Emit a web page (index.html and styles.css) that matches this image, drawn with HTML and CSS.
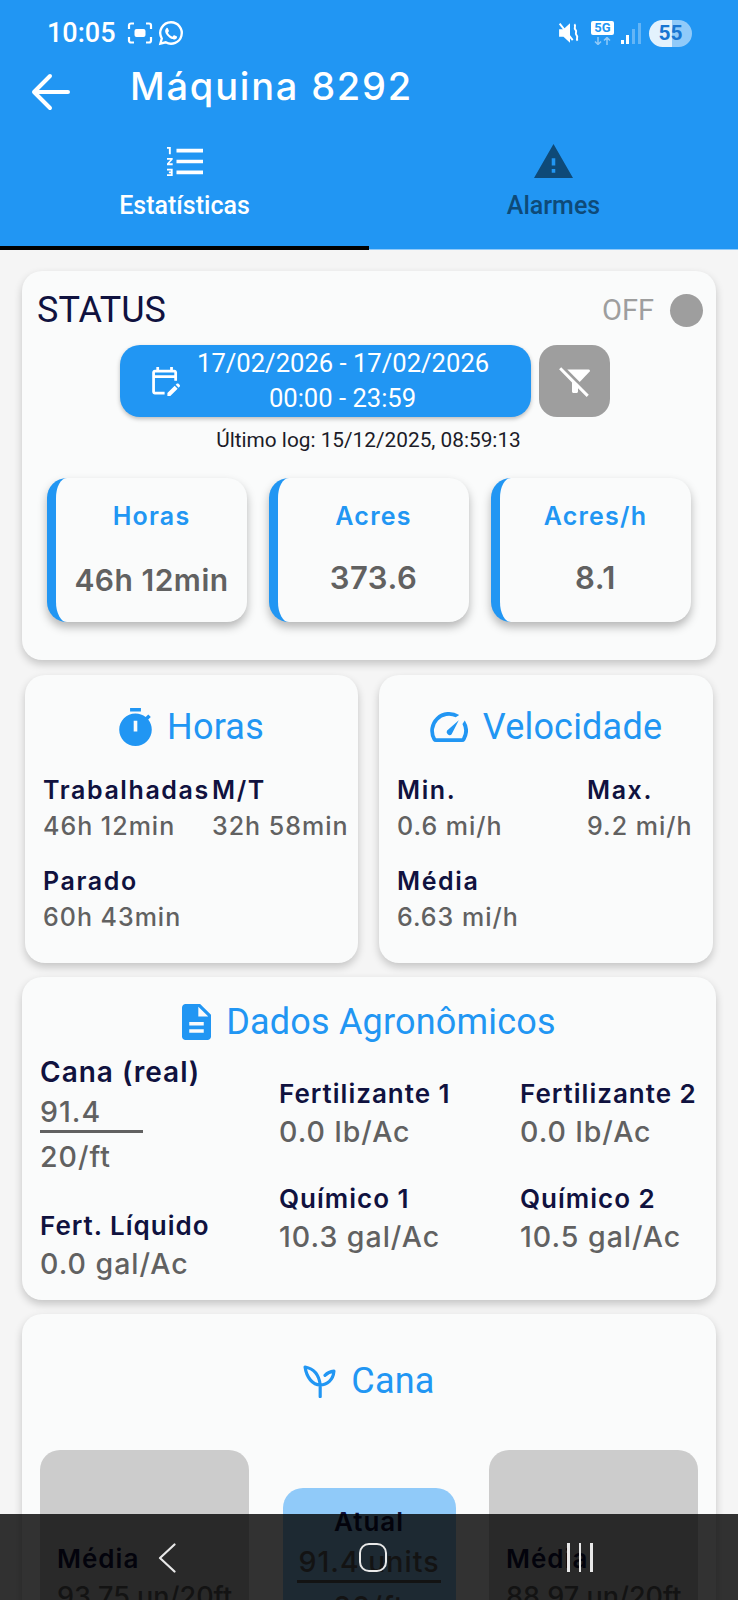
FILE: index.html
```html
<!DOCTYPE html>
<html>

<head>
    <title>Máquina 8292</title>
    <meta name="viewport" content="width=device-width, initial-scale=1.0">
    <link rel="stylesheet" href="styles.css">
</head>

<body>
    <div class="screen">
        <header class="appbar">
            <div class="statusbar">
                <span class="clock">10:05</span>
                <svg class="st-shot" viewBox="0 0 26 22" fill="none" stroke="#fff" stroke-width="2.2">
                    <path d="M2 7V3.500A2 2 0 0 1 4 1.500h3M19 1.500h3a2 2 0 0 1 2 2V7M24 15v3.500a2 2 0 0 1-2 2h-3M7 20.500H4a2 2 0 0 1-2-2V15" />
                    <rect x="7.500" y="7" width="11" height="8" rx="2" fill="#fff" stroke="none" />
                </svg>
                <svg class="st-wa" viewBox="0 0 24 24">
                    <path d="M12 2.800a9.200 9.200 0 0 0-7.900 13.900L2.900 21.200l4.600-1.200A9.200 9.200 0 1 0 12 2.800z" fill="none" stroke="#fff" stroke-width="2" />
                    <path fill="#fff" d="M8.800 7.600c-.3 0-.6.1-.9.5-.4.500-.9 1.200-.9 2.400s.9 2.400 1 2.600c.2.200 1.800 2.800 4.300 3.800 2.100.8 2.600.7 3 .6.500 0 1.500-.6 1.700-1.200.2-.6.2-1.100.2-1.200-.1-.1-.2-.2-.5-.3l-1.800-.9c-.2-.1-.4-.1-.6.1l-.8 1c-.1.2-.3.2-.5.1-.3-.1-1.100-.4-2.100-1.300-.8-.7-1.300-1.500-1.500-1.800-.1-.3 0-.4.1-.5l.4-.5.3-.4c.1-.2 0-.4 0-.5l-.8-1.900c-.2-.5-.4-.5-.6-.5z" />
                </svg>
                <div class="st-right">
                    <svg class="st-mute" viewBox="0 0 22 20">
                        <path fill="#fff" d="M1 6.500h4L11 1v18L5 13.500H1z" />
                        <path fill="none" stroke="#fff" stroke-width="1.800" d="M1.500 1.500l12 15M15 2c2 2-1 3 1 5s-1 3 1 5-1 3 1 5" />
                    </svg>
                    <div class="st-net">
                        <span class="net-badge">5G</span>
                        <svg class="net-arrows" viewBox="0 0 22 8" fill="none" stroke="#90caf9" stroke-width="1.500">
                            <path d="M6 0v7M3 4.500L6 7.500l3-3M15 8V1M12 3.500L15 .5l3 3" />
                        </svg>
                    </div>
                    <svg class="st-signal" viewBox="0 0 20 21">
                        <rect x="0" y="17" width="3" height="4" fill="#fff" />
                        <rect x="5" y="12" width="3" height="9" fill="#fff" />
                        <rect x="11" y="6" width="3" height="15" fill="#64b5f6" />
                        <rect x="17" y="0" width="3" height="21" fill="#64b5f6" />
                    </svg>
                    <div class="battery">55</div>
                </div>
            </div>
            <div class="titlebar">
                <svg class="back" viewBox="0 0 40 38" fill="none" stroke="#fff" stroke-width="4" stroke-linecap="round" stroke-linejoin="round">
                    <path d="M37 19H3M19 3L3 19l16 16" />
                </svg>
                <h1>Máquina 8292</h1>
            </div>
            <nav class="tabs">
                <div class="tab active">
                    <svg class="tab-icon" viewBox="2 4 19 16" fill="#fff" preserveAspectRatio="none">
                        <path d="M2 17h2v.5H3v1h1v.5H2v1h3v-4H2v1zm1-9h1V4H2v1h1v3zm-1 3h1.800L2 13.100v.9h3v-1H3.200L5 10.900V10H2v1zm5-6v2h14V5H7zm0 14h14v-2H7v2zm0-6h14v-2H7v2z" />
                    </svg>
                    <span>Estatísticas</span>
                </div>
                <div class="tab">
                    <svg class="tab-icon warn" viewBox="1 2 22 19" fill="#0e4a78" preserveAspectRatio="none">
                        <path d="M1 21h22L12 2 1 21zm12-3h-2v-2h2v2zm0-4h-2v-4h2v4z" />
                    </svg>
                    <span>Alarmes</span>
                </div>
            </nav>
        </header>

        <main class="content">
            <section class="card status-card">
                <div class="status-head">
                    <span class="status-title">STATUS</span>
                    <div class="status-state">
                        <span>OFF</span>
                        <i class="dot"></i>
                    </div>
                </div>
                <div class="date-row">
                    <div class="date-btn">
                        <svg class="date-icon" viewBox="3 2 20 21" fill="#fff">
                            <path d="M5 10h14v2h2V6c0-1.100-.9-2-2-2h-1V2h-2v2H8V2H6v2H5c-1.110 0-1.990.9-1.990 2L3 20c0 1.100.89 2 2 2h7v-2H5V10zm0-4h14v2H5V6zm17.840 10.280-.71.71-2.120-2.120.71-.71c.39-.39 1.020-.39 1.410 0l.71.71c.39.39.39 1.020 0 1.410zm-3.540-.7 2.120 2.120-5.300 5.300H14v-2.120l5.300-5.300z" />
                        </svg>
                        <div class="date-text">
                            <div>17/02/2026 - 17/02/2026</div>
                            <div>00:00 - 23:59</div>
                        </div>
                    </div>
                    <div class="filter-btn">
                        <svg viewBox="0 0 24 24" fill="#fff">
                            <path d="M21.790 5.610C22.200 5.090 21.820 4.330 21.160 4.330H6.830l8.310 8.310 6.650-7.030z" />
                            <path d="M2.810 2.810 1.390 4.220 10 13v6c0 .55.45 1 1 1h2c.55 0 1-.45 1-1v-2.170l5.780 5.780 1.410-1.410L2.810 2.810z" />
                        </svg>
                    </div>
                </div>
                <p class="last-log">Último log: 15/12/2025, 08:59:13</p>
                <div class="stats">
                    <div class="stat">
                        <div class="stat-label">Horas</div>
                        <div class="stat-value">46h 12min</div>
                    </div>
                    <div class="stat">
                        <div class="stat-label">Acres</div>
                        <div class="stat-value big">373.6</div>
                    </div>
                    <div class="stat">
                        <div class="stat-label">Acres/h</div>
                        <div class="stat-value big">8.1</div>
                    </div>
                </div>
            </section>

            <div class="pair">
                <section class="card half">
                    <h2 class="card-title">
                        <svg class="title-icon timer" viewBox="3 1 18 21" fill="#2196f3">
                            <path fill-rule="evenodd" d="M15 1H9v2h6V1zm-4 13h2V8h-2v6zm8.030-6.610 1.420-1.420c-.43-.51-.9-.99-1.410-1.410l-1.420 1.420C16.070 4.740 14.120 4 12 4c-4.970 0-9 4.030-9 9s4.020 9 9 9 9-4.030 9-9c0-2.120-.74-4.070-1.970-5.610z" />
                        </svg>
                        Horas
                    </h2>
                    <div class="grid-hours">
                        <div class="item">
                            <div class="label">Trabalhadas</div>
                            <div class="value">46h 12min</div>
                        </div>
                        <div class="item">
                            <div class="label">M/T</div>
                            <div class="value">32h 58min</div>
                        </div>
                        <div class="item">
                            <div class="label">Parado</div>
                            <div class="value">60h 43min</div>
                        </div>
                    </div>
                </section>
                <section class="card half">
                    <h2 class="card-title">
                        <svg class="title-icon speed" viewBox="2 3.500 20 17" fill="#2196f3">
                            <path d="M20.380 8.570l-1.230 1.850a8 8 0 0 1-.22 7.580H5.070A8 8 0 0 1 15.580 6.850l1.850-1.230A10 10 0 0 0 3.350 19a2 2 0 0 0 1.720 1h13.850a2 2 0 0 0 1.740-1 10 10 0 0 0-.27-10.440z" />
                            <path d="M11.200 15.700a1.400 1.400 0 0 0 2.200.2l3.800-7.500-6.200 5.500a1.400 1.400 0 0 0 .2 1.800z" />
                        </svg>
                        Velocidade
                    </h2>
                    <div class="grid-speed">
                        <div class="item">
                            <div class="label">Min.</div>
                            <div class="value">0.6 mi/h</div>
                        </div>
                        <div class="item">
                            <div class="label">Max.</div>
                            <div class="value">9.2 mi/h</div>
                        </div>
                        <div class="item">
                            <div class="label">Média</div>
                            <div class="value">6.63 mi/h</div>
                        </div>
                    </div>
                </section>
            </div>

            <section class="card agro">
                <h2 class="card-title">
                    <svg class="title-icon doc" viewBox="4 2 16 20" fill="#2196f3" preserveAspectRatio="none">
                        <path d="M14 2H6c-1.100 0-1.990.9-1.990 2L4 20c0 1.100.89 2 1.990 2H18c1.100 0 2-.9 2-2V8l-6-6zm2 16H8v-2h8v2zm0-4H8v-2h8v2zm-3-5V3.500L18.500 9H13z" />
                    </svg>
                    Dados Agronômicos
                </h2>
                <div class="agro-cols">
                    <div class="agro-col first">
                        <div class="item">
                            <div class="label big tall">Cana (real)</div>
                            <div class="fraction">
                                <div class="value big">91.4</div>
                                <div class="value big">20/ft</div>
                            </div>
                        </div>
                        <div class="item fert">
                            <div class="label big">Fert. Líquido</div>
                            <div class="value big">0.0 gal/Ac</div>
                        </div>
                    </div>
                    <div class="agro-col">
                        <div class="item">
                            <div class="label big">Fertilizante 1</div>
                            <div class="value big">0.0 lb/Ac</div>
                        </div>
                        <div class="item">
                            <div class="label big">Químico 1</div>
                            <div class="value big">10.3 gal/Ac</div>
                        </div>
                    </div>
                    <div class="agro-col">
                        <div class="item">
                            <div class="label big">Fertilizante 2</div>
                            <div class="value big">0.0 lb/Ac</div>
                        </div>
                        <div class="item">
                            <div class="label big">Químico 2</div>
                            <div class="value big">10.5 gal/Ac</div>
                        </div>
                    </div>
                </div>
            </section>

            <section class="card cana">
                <h2 class="card-title">
                    <svg class="title-icon sprout" viewBox="0 0 24 24" fill="none" stroke="#2196f3" stroke-width="2.300" stroke-linejoin="round" stroke-linecap="round">
                        <path d="M12.500 23V14.500M12.500 14.500C7 14.500 2.500 9 1.500 1.500 7 2.500 11.500 6 12.500 14.500zM12.500 14.500c5 0 9.500-3.500 10-10-2.500.3-4.800 1.300-6.500 3" />
                    </svg>
                    Cana
                </h2>
                <div class="cana-row">
                    <div class="cana-box side">
                        <div class="label big">Média</div>
                        <div class="value big">93.75 un/20ft</div>
                    </div>
                    <div class="cana-box now">
                        <div class="label big">Atual</div>
                        <div class="fraction wide">
                            <div class="value big">91.4 units</div>
                            <div class="value big">20/ft</div>
                        </div>
                    </div>
                    <div class="cana-box side">
                        <div class="label big">Média</div>
                        <div class="value big">88.97 un/20ft</div>
                    </div>
                </div>
            </section>
        </main>

        <div class="navbar">
            <svg class="nav-back" viewBox="0 0 18 30" fill="none" stroke="#e8e8e8" stroke-width="2.200" stroke-linecap="round" stroke-linejoin="round">
                <path d="M16.500 1.500L2 15l14.500 13.500" />
            </svg>
            <i class="nav-home"></i>
            <div class="nav-recent"><i></i><i></i><i></i></div>
        </div>
    </div>
</body>

</html>
```

FILE: styles.css
```css
* {
    box-sizing: border-box;
}

body {
    margin: 0;
    font-family: 'Roboto', sans-serif;
    background: #f5f5f5;
}

.screen {
    position: relative;
    width: 738px;
    height: 1600px;
    overflow: hidden;
    background: #f5f5f5;
}

/* top bar */

.appbar {
    height: 250px;
    background: #2196f3;
    color: #fff;
}

.statusbar {
    display: flex;
    align-items: center;
    height: 66px;
    padding: 0 46px 0 47px;
}

.clock {
    font-size: 27px;
    font-weight: 500;
    width: 80px;
}

.st-shot {
    width: 26px;
    height: 22px;
}

.st-wa {
    width: 28px;
    height: 28px;
    margin-left: 4px;
}

.st-right {
    display: flex;
    align-items: center;
    margin-left: auto;
}

.st-mute {
    width: 24px;
    height: 22px;
}

.st-net {
    display: flex;
    flex-direction: column;
    align-items: center;
    width: 23px;
    margin-left: 9px;
}

.net-badge {
    width: 23px;
    height: 14px;
    background: #fff;
    border-radius: 2px;
    color: #2196f3;
    font-size: 13px;
    font-weight: 700;
    line-height: 14px;
    text-align: center;
}

.net-arrows {
    width: 22px;
    height: 8px;
    margin-top: 2px;
}

.st-signal {
    width: 20px;
    height: 21px;
    margin-left: 7px;
}

.battery {
    width: 43px;
    height: 27px;
    margin-left: 8px;
    border-radius: 14px;
    background: linear-gradient(90deg, #e3f2fd 54%, #90caf9 54%);
    color: #1976d2;
    font-size: 21px;
    font-weight: 700;
    line-height: 27px;
    text-align: center;
}

.titlebar {
    display: flex;
    align-items: center;
    height: 40px;
    padding-left: 31px;
}

.back {
    width: 40px;
    height: 38px;
    margin-top: 11px;
}

h1 {
    margin: 0 0 0 59px;
    font-family: 'Inter', sans-serif;
    font-size: 38px;
    font-weight: 500;
    letter-spacing: 1.8px;
    white-space: nowrap;
}

.tabs {
    display: grid;
    grid-template-columns: 369px 369px;
    height: 144px;
    border-bottom: 1px solid #90caf9;
}

.tab {
    display: flex;
    flex-direction: column;
    align-items: center;
    height: 144px;
    padding-top: 41px;
    color: #0e4a78;
    font-size: 25px;
    font-weight: 500;
}

.tab.active {
    color: #fff;
    border-bottom: 4px solid #000;
}

.tab-icon {
    width: 36px;
    height: 29px;
    margin-bottom: 15px;
}

.tab-icon.warn {
    width: 39px;
    height: 34px;
    margin-top: -3px;
    margin-bottom: 13px;
}

/* cards */

.content {
    padding: 21px 22px 0;
}

.card {
    background: #fafbfb;
    border-radius: 20px;
    box-shadow: 0 4px 8px rgba(0, 0, 0, 0.2);
}

.status-card {
    height: 389px;
    padding: 16px 13px 0 15px;
}

.status-head {
    display: flex;
    justify-content: space-between;
    align-items: center;
    height: 46px;
}

.status-title {
    color: #10123f;
    font-size: 36px;
}

.status-state {
    display: flex;
    align-items: center;
    gap: 16px;
    color: #9e9e9e;
    font-size: 29px;
}

.dot {
    width: 33px;
    height: 33px;
    border-radius: 50%;
    background: #9e9e9e;
}

.date-row {
    display: flex;
    justify-content: center;
    gap: 8px;
    margin-top: 12px;
    padding-right: 10px;
}

.date-btn {
    display: flex;
    align-items: center;
    width: 411px;
    height: 72px;
    padding-left: 32px;
    border-radius: 20px;
    background: #2196f3;
    color: #fff;
    box-shadow: 0 2px 4px rgba(0, 0, 0, 0.25);
}

.date-icon {
    width: 28px;
    height: 29px;
}

.date-text {
    width: 291px;
    margin-left: 17px;
    font-size: 25.600px;
    line-height: 35px;
    text-align: center;
    white-space: nowrap;
}

.filter-btn {
    display: flex;
    align-items: center;
    justify-content: center;
    width: 71px;
    height: 72px;
    border-radius: 18px;
    background: #9e9e9e;
}

.filter-btn svg {
    width: 36px;
    height: 36px;
}

.last-log {
    margin: 11px 0 0;
    padding-right: 3px;
    color: #1c1c28;
    font-size: 20.800px;
    line-height: 24px;
    text-align: center;
}

.stats {
    display: grid;
    grid-template-columns: 200px 200px 200px;
    column-gap: 22px;
    margin: 26px 0 0 10px;
}

.stat {
    height: 144px;
    padding-top: 21px;
    border-left: 9px solid #2196f3;
    border-radius: 20px;
    background: #fafbfb;
    box-shadow: 0 5px 10px rgba(0, 0, 0, 0.28);
    text-align: center;
}

.stat-label {
    color: #2196f3;
    font-family: 'Inter', sans-serif;
    font-size: 25px;
    font-weight: 600;
    letter-spacing: 1.200px;
    line-height: 34px;
}

.stat-value {
    margin-top: 27px;
    color: #616161;
    font-family: 'Inter', sans-serif;
    font-size: 30px;
    font-weight: 600;
    letter-spacing: .5px;
    line-height: 40px;
    white-space: nowrap;
}

.stat-value.big {
    margin-top: 25px;
    font-size: 31px;
}

.pair {
    display: grid;
    grid-template-columns: 333px 334px;
    column-gap: 21px;
    margin: 15px 3px 0;
}

.half {
    height: 288px;
}

.card-title {
    display: flex;
    align-items: center;
    justify-content: center;
    height: 40px;
    margin: 0;
    color: #2196f3;
    font-size: 36px;
    font-weight: 400;
    letter-spacing: .2px;
    white-space: nowrap;
}

.half .card-title {
    margin-top: 32px;
}

.title-icon {
    margin-right: 15px;
}

.timer {
    width: 33px;
    height: 38px;
}

.speed {
    width: 38px;
    height: 32px;
}

.doc {
    width: 29px;
    height: 36px;
}

.sprout {
    width: 33px;
    height: 33px;
}

.label {
    color: #10123f;
    font-family: 'Inter', sans-serif;
    font-size: 25px;
    font-weight: 600;
    letter-spacing: 1.600px;
    line-height: 36px;
    white-space: nowrap;
}

.value {
    color: #616161;
    font-family: 'Inter', sans-serif;
    font-size: 25px;
    font-weight: 500;
    letter-spacing: 1px;
    line-height: 36px;
    white-space: nowrap;
}

.label.big {
    font-size: 26px;
    letter-spacing: 1px;
    line-height: 38px;
}

.label.tall {
    font-size: 28px;
}

.value.big {
    font-size: 28.500px;
    letter-spacing: 1px;
    line-height: 38px;
}

.grid-hours {
    display: grid;
    grid-template-columns: 169px 1fr;
    row-gap: 19px;
    margin: 25px 0 0 18px;
}

.grid-speed {
    display: grid;
    grid-template-columns: 190px 1fr;
    row-gap: 19px;
    margin: 25px 0 0 18px;
}

.agro {
    height: 323px;
    margin-top: 14px;
    padding-top: 25px;
}

.agro-cols {
    display: grid;
    grid-template-columns: 239px 241px 1fr;
    margin: 9px 0 0 18px;
}

.agro-col {
    padding-top: 24px;
}

.agro-col .item + .item {
    margin-top: 29px;
}

.agro-col.first {
    padding-top: 2px;
}

.agro-col.first .item + .item {
    margin-top: 26px;
}

.fraction {
    display: inline-block;
    min-width: 103px;
}

.fraction .value:first-child {
    height: 42px;
    border-bottom: 3px solid #616161;
    line-height: 42px;
}

.fraction .value + .value {
    line-height: 48px;
}

.cana {
    height: 400px;
    margin-top: 14px;
    padding-top: 47px;
}

.cana-row {
    display: grid;
    grid-template-columns: 209px 173px 209px;
    justify-content: space-between;
    align-items: start;
    margin: 49px 18px 0;
}

.cana-box {
    height: 240px;
    border-radius: 20px;
}

.side {
    padding: 90px 0 0 17px;
    background: #cccccc;
}

.side .value.big {
    font-size: 27px;
    letter-spacing: 0;
}

.now {
    margin-top: 38px;
    padding-top: 15px;
    background: #90caf9;
    text-align: center;
}

.fraction.wide {
    width: 144px;
}

/* android nav buttons, sit over the page */

.navbar {
    position: absolute;
    left: 0;
    right: 0;
    bottom: 0;
    height: 86px;
    background: rgba(0, 0, 0, 0.8);
}

.nav-back {
    position: absolute;
    left: 158px;
    top: 29px;
    width: 18px;
    height: 30px;
}

.nav-home {
    position: absolute;
    left: 359px;
    top: 29px;
    width: 28px;
    height: 29px;
    border: 2.500px solid #e8e8e8;
    border-radius: 10px;
}

.nav-recent {
    position: absolute;
    left: 567px;
    top: 29px;
    display: flex;
    gap: 9px;
}

.nav-recent i {
    width: 2.500px;
    height: 29px;
    background: #e8e8e8;
}
```
